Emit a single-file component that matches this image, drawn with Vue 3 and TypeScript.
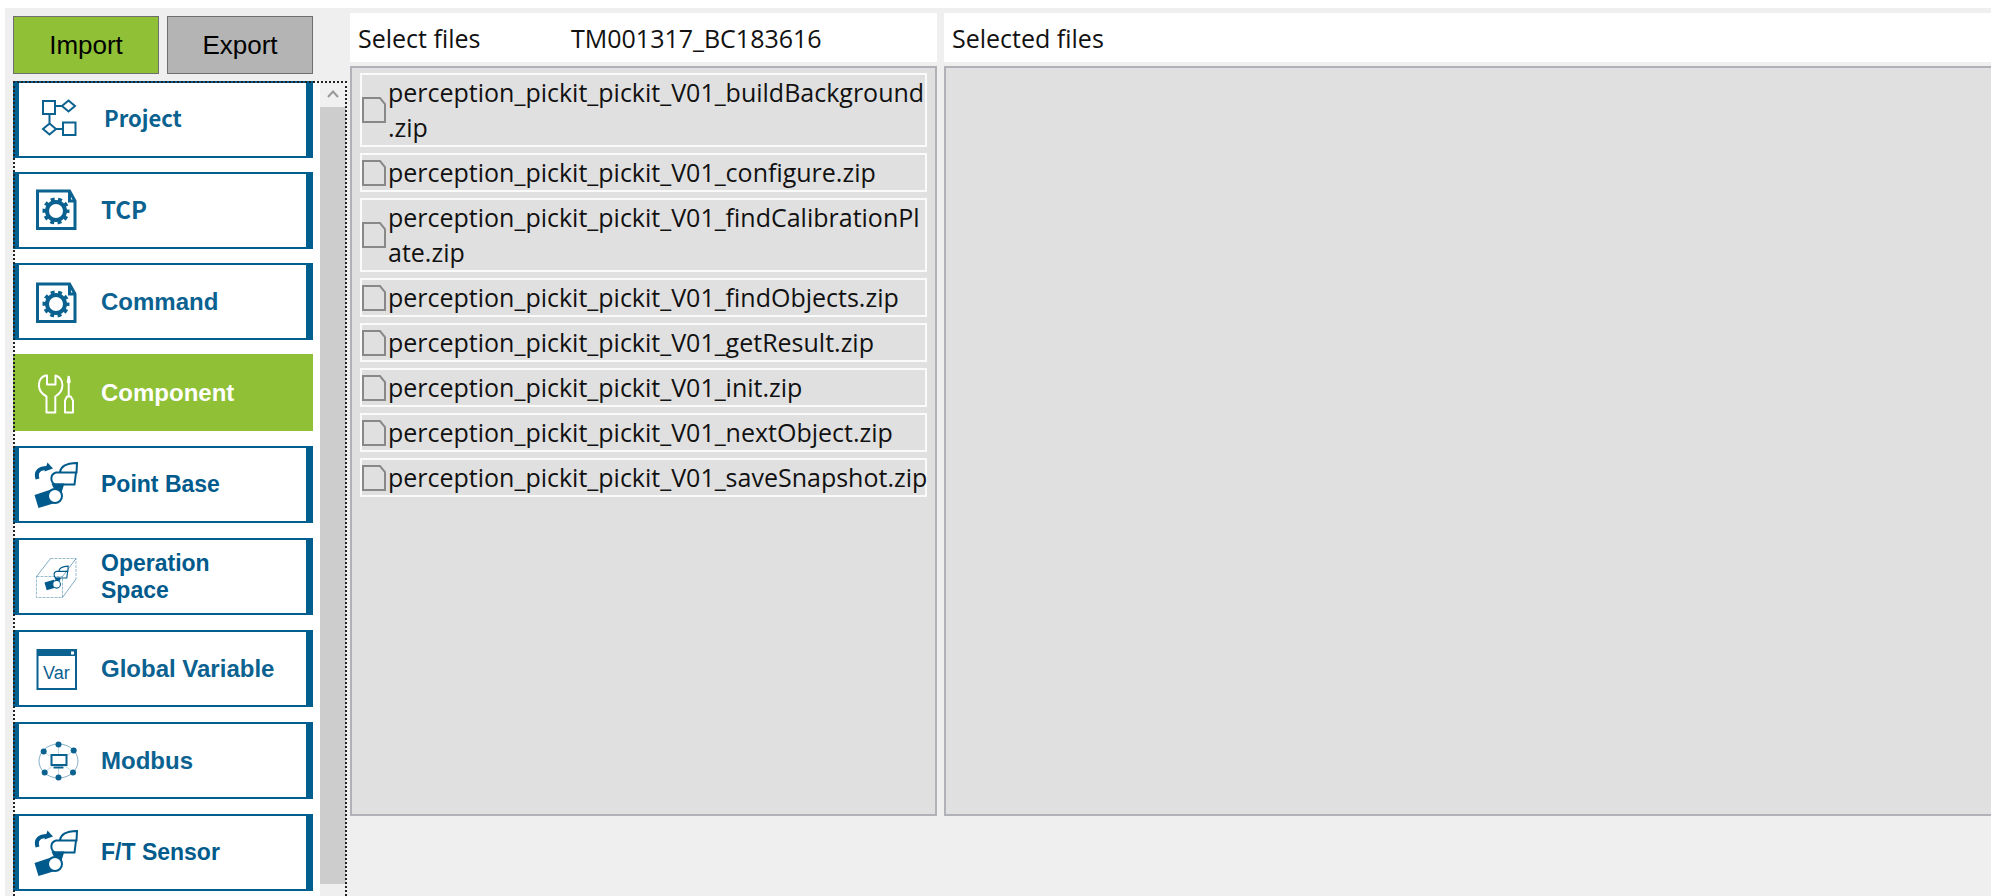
<script setup lang="ts">
import { ref } from 'vue'

type IconName = 'flow' | 'gear' | 'tools' | 'robot' | 'space' | 'var' | 'modbus'

interface Category {
  label: string
  icon: IconName
  look?: string
}

const mode = ref<'import' | 'export'>('import')
const active = ref('Component')

const groups: Category[][] = [
  [
    { label: 'Project', icon: 'flow', look: 'humanist small' },
    { label: 'TCP', icon: 'gear', look: 'humanist' },
    { label: 'Command', icon: 'gear' },
    { label: 'Component', icon: 'tools' },
  ],
  [
    { label: 'Point Base', icon: 'robot', look: 'compact' },
    { label: 'Operation Space', icon: 'space', look: 'compact' },
    { label: 'Global Variable', icon: 'var' },
    { label: 'Modbus', icon: 'modbus' },
    { label: 'F/T Sensor', icon: 'robot', look: 'compact' },
  ],
]

// Each name is a list of parts; a long name may wrap between two of them.
const files: string[][] = [
  ['perception_pickit_pickit_V01_buildBackground', '.zip'],
  ['perception_pickit_pickit_V01_configure.zip'],
  ['perception_pickit_pickit_V01_findCalibrationPl', 'ate.zip'],
  ['perception_pickit_pickit_V01_findObjects.zip'],
  ['perception_pickit_pickit_V01_getResult.zip'],
  ['perception_pickit_pickit_V01_init.zip'],
  ['perception_pickit_pickit_V01_nextObject.zip'],
  ['perception_pickit_pickit_V01_saveSnapshot.zip'],
]
</script>

<template>
  <div class="page">
    <main class="window">
      <aside class="side">
        <div class="modes">
          <button type="button" class="mode" :class="{ on: mode === 'import' }" @click="mode = 'import'">Import</button>
          <button type="button" class="mode" :class="{ on: mode === 'export' }" @click="mode = 'export'">Export</button>
        </div>
        <div class="browser">
          <nav class="categories">
            <div v-for="(group, g) in groups" :key="g" class="group">
              <button
                v-for="item in group"
                :key="item.label"
                type="button"
                class="category"
                :class="[item.look, { active: active === item.label }]"
                @click="active = item.label"
              >
                <svg class="icon" viewBox="0 0 46 48" fill="none" stroke="currentColor" aria-hidden="true">
                  <g v-if="item.icon === 'flow'" stroke-width="2">
                    <rect x="9" y="7" width="12" height="13" />
                    <path d="M34.500 6.500l6.500 5.500-6.500 5.500-6.500-5.500zM21 12h7M15.500 20v9M15.500 29.500l6.500 5.500-6.500 5.500-6.500-5.500zM22 35h7" />
                    <rect x="29" y="28.500" width="12.500" height="12.500" />
                  </g>
                  <g v-else-if="item.icon === 'gear'">
                    <path d="M3.500 6H35.500L41 16V43.500H3.500Z" stroke-width="3" />
                    <path d="M35.500 6V16H41" stroke-width="3" />
                    <circle cx="22" cy="26" r="9" stroke-width="4" />
                    <circle cx="22" cy="26" r="11.500" stroke-width="4" stroke-dasharray="3.800 3.426" stroke-dashoffset="1.900" />
                  </g>
                  <g v-else-if="item.icon === 'tools'" stroke-width="2" stroke-linejoin="round">
                    <path d="M11.500 6.500C3 9.500 2 22 12.500 27.500V43.500H21.300V27.500C31 22 30.500 9.500 21.500 6.500V15.500H13V6.500Z" />
                    <path d="M34.700 7L33.700 13L34.700 14V27M34.700 7L35.700 13L34.700 14M33 27.500H36.700L39 31.500V43.500H31V31.500Z" />
                  </g>
                  <g v-else-if="item.icon === 'robot'" stroke-width="2">
                    <path d="M3.500 18C1 10 6 7 13 7" stroke-width="4" />
                    <path d="M13.500 1.500L19 7.500L10.500 10.500Z" fill="currentColor" stroke="none" />
                    <path d="M26 11C27 5.500 31 2.500 43 2L42.500 11.500H22C16 13 16 21 21 23.500H40.500L42 11.500" />
                    <path d="M19 23.500H29L27 30H22Z" fill="currentColor" />
                    <path d="M0.500 34L17 28.500L21 42L4.500 47Z" fill="currentColor" stroke="none" />
                    <circle cx="21" cy="35" r="7" fill="#fff" />
                  </g>
                  <g v-else-if="item.icon === 'space'">
                    <path d="M2.500 23.500L16.500 5.500M28.500 44.500L42 26M28.500 23.500L42 5.500" opacity="0.5" />
                    <path d="M16.500 5.500H42V26M2.500 23.500H28.500V44.500H2.500Z" stroke-dasharray="3 1" opacity="0.4" />
                    <g transform="translate(10.500 12) scale(.55)">
                      <path d="M26 11C27 5.500 31 2.500 43 2L42.500 11.500H22C16 13 16 21 21 23.500H40.500L42 11.500" stroke-width="2" />
                      <path d="M19 23.500H29L27 30H22Z" fill="currentColor" />
                      <path d="M0 32L17 27L21 41L4 46Z" fill="currentColor" stroke="none" />
                      <circle cx="22" cy="35" r="7" fill="#fff" stroke-width="2" />
                    </g>
                  </g>
                  <g v-else-if="item.icon === 'var'">
                    <rect x="3.500" y="5" width="38.500" height="39" stroke-width="2" />
                    <path d="M3 4H43V11H3Z" fill="currentColor" stroke="none" />
                    <rect x="37" y="6.500" width="3" height="3" fill="#fff" stroke="none" />
                    <text x="9" y="34" class="glyph">Var</text>
                  </g>
                  <g v-else>
                    <ellipse cx="24.500" cy="24" rx="19.500" ry="17" opacity="0.5" />
                    <path d="M24.500 7V41M10 15L39.500 35M39.500 14L10.500 35" opacity="0.25" />
                    <rect x="17.500" y="18" width="15" height="10" fill="#fff" stroke-width="2" />
                    <path d="M19.500 30.500H29.500" stroke-width="2" />
                    <g fill="currentColor" stroke="none">
                      <circle cx="24.500" cy="7.500" r="3" />
                      <circle cx="9.700" cy="14.500" r="3" />
                      <circle cx="39.700" cy="13.500" r="3" />
                      <circle cx="10.700" cy="35.500" r="3" />
                      <circle cx="39" cy="35.500" r="3" />
                      <circle cx="24.500" cy="40.500" r="3" />
                    </g>
                  </g>
                </svg>
                <span class="label">{{ item.label }}</span>
              </button>
            </div>
          </nav>
          <div class="scrollbar">
            <button type="button" class="up" aria-label="Scroll up">
              <svg viewBox="0 0 12 8" width="12" height="8" fill="none" stroke="#999" stroke-width="2"><path d="M1 7L6 1.500L11 7" /></svg>
            </button>
            <div class="thumb"></div>
          </div>
        </div>
      </aside>

      <section class="column source">
        <header class="bar">
          <span class="title">Select files</span>
          <span>TM001317_BC183616</span>
        </header>
        <ul class="panel">
          <li v-for="file in files" :key="file[0]">
            <button type="button" class="file">
              <svg class="sheet" viewBox="0 0 24 26" fill="none" stroke="#888" stroke-width="2" aria-hidden="true">
                <path d="M1 1H18L23 7V25H1Z" />
              </svg>
              <span class="name"><template v-for="(part, p) in file" :key="p"><wbr v-if="p > 0" />{{ part }}</template></span>
            </button>
          </li>
        </ul>
      </section>

      <section class="column target">
        <header class="bar"><span>Selected files</span></header>
        <div class="panel"></div>
      </section>
    </main>
  </div>
</template>

<style>
body {
  margin: 0;
  background: #fff;
}
</style>

<style scoped>
.page {
  box-sizing: border-box;
  height: 100vh;
  padding: 8px 8px 0 5px;
  overflow: hidden;
  background: #fff;
  font-family: 'Liberation Sans', Arial, sans-serif;
}
.window {
  display: flex;
  height: 100%;
  background: #efefef;
}
button {
  margin: 0;
  cursor: pointer;
}
.side {
  display: flex;
  flex: none;
  flex-direction: column;
  width: 334px;
  padding: 8px 3px 0 8px;
}
.modes {
  display: grid;
  grid-template-columns: 146px 146px;
  gap: 8px;
  padding-bottom: 7px;
}
.mode {
  height: 58px;
  padding: 0;
  border: 1px solid #6e6e6e;
  background: #b4b4b4;
  color: #000;
  font: 26px 'Liberation Sans', Arial, sans-serif;
}
.mode.on {
  background: #8fc036;
}
.browser {
  position: relative;
  display: flex;
  flex: 1;
  min-height: 0;
  overflow: hidden;
  background: #fff;
}
.browser::after {
  position: absolute;
  inset: 0 0 -4px;
  border: 2px dotted #222;
  content: '';
  pointer-events: none;
}
.categories {
  display: flex;
  flex: none;
  flex-direction: column;
  gap: 15px;
  width: 300px;
}
.group {
  display: grid;
  gap: 14px;
}
.group + .group {
  gap: 15px;
}
.category {
  display: flex;
  align-items: center;
  gap: 21px;
  box-sizing: border-box;
  height: 77px;
  padding: 0 10px 0 15px;
  border: solid #005f8f;
  border-width: 2px 7px 2px 6px;
  background: #fff;
  color: #0b6290;
  font: bold 24px/27px 'Liberation Sans', Arial, sans-serif;
  text-align: left;
}
.category.compact {
  padding-right: 60px;
  color: #005a8c;
  font-size: 23px;
}
.category.humanist {
  padding-bottom: 4px;
  font-family: 'Noto Sans CJK SC', 'Open Sans', sans-serif;
}
.category.small {
  gap: 24px;
  font-size: 22px;
}
.category.active {
  border-color: #8fc036;
  background: #8fc036;
  color: #fff;
}
.icon {
  flex: none;
  width: 46px;
  height: 48px;
}
.glyph {
  fill: currentColor;
  stroke: none;
  font: 18px 'Liberation Sans', Arial, sans-serif;
}
.scrollbar {
  display: flex;
  flex-direction: column;
  width: 26px;
  margin-left: 7px;
  padding-bottom: 12px;
  background: #efefef;
}
.up {
  display: grid;
  flex: none;
  place-items: center;
  height: 26px;
  padding: 0;
  border: 0;
  background: #f0f0f0;
}
.thumb {
  flex: 1;
  background: #cdcdcd;
}
.column {
  display: flex;
  flex-direction: column;
  gap: 4px;
  min-width: 0;
  padding: 5px 0 80px;
  color: #111;
  font: 25px/35px 'Open Sans', 'Noto Sans', sans-serif;
}
.source {
  flex: none;
  width: 587px;
}
.target {
  flex: 1;
  margin-left: 7px;
}
.bar {
  display: flex;
  align-items: center;
  box-sizing: border-box;
  height: 49px;
  padding: 2px 8px 0;
  background: #fff;
}
.title {
  width: 213px;
}
.panel {
  display: flex;
  flex: 1;
  flex-direction: column;
  gap: 6px;
  margin: 0;
  padding: 5px 8px;
  border: 2px solid #b0b2b8;
  background: #e0e0e0;
  list-style: none;
}
.target .panel {
  border-right: 0;
}
.file {
  display: flex;
  align-items: center;
  gap: 2px;
  box-sizing: border-box;
  width: 100%;
  padding: 0;
  border: 2px solid #fafafa;
  background: transparent;
  color: #111;
  font: inherit;
  text-align: left;
}
.sheet {
  flex: none;
  width: 24px;
  height: 26px;
}
.name {
  flex: 1;
  min-width: 0;
}
</style>
